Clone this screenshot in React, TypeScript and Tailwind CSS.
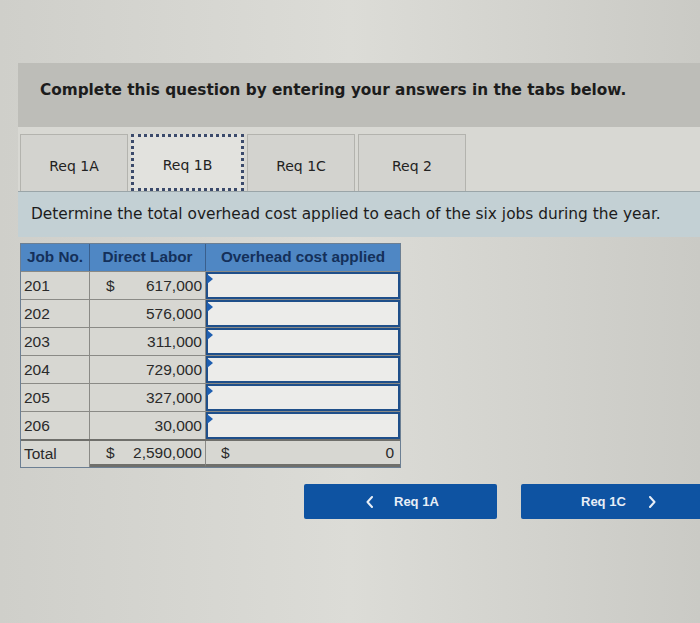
const rows = [
  { job: '201', labor: '617,000', dollar: true },
  { job: '202', labor: '576,000' },
  { job: '203', labor: '311,000' },
  { job: '204', labor: '729,000' },
  { job: '205', labor: '327,000' },
  { job: '206', labor: '30,000' },
];

const tabs = ['Req 1A', 'Req 1B', 'Req 1C', 'Req 2'];

function ChevronLeft() {
  return (
    <svg width="8" height="12" viewBox="0 0 8 12" fill="none" stroke="currentColor" strokeWidth="2" strokeLinecap="round" strokeLinejoin="round">
      <path d="M6 1L1.5 6L6 11" />
    </svg>
  );
}

function ChevronRight() {
  return (
    <svg width="8" height="12" viewBox="0 0 8 12" fill="none" stroke="currentColor" strokeWidth="2" strokeLinecap="round" strokeLinejoin="round">
      <path d="M2 1L6.5 6L2 11" />
    </svg>
  );
}

export default function App() {
  return (
    <div className="w-[700px] h-[623px] overflow-hidden bg-gradient-to-r from-[#cfcfca] via-[#dcdcd7] to-[#cacac5] pt-[63px] pl-[18px]">
      {/* Question header */}
      <div className="h-[64px] bg-[#bdbdb8] pt-[16px] pl-[22px] font-['DejaVu_Sans',sans-serif] font-bold text-[15.3px] text-[#1c1c1c]">
        Complete this question by entering your answers in the tabs below.
      </div>

      {/* Tabs */}
      <div className="bg-[#d8d8d3] pt-[7px] pl-[2px] flex gap-[3px] font-['DejaVu_Sans',sans-serif] text-[14px] text-[#222]">
        {tabs.map((t, i) => (
          <div
            key={t}
            className={
              i === 1
                ? 'w-[113px] h-[57px] flex items-center justify-center pt-[6px] bg-[#e2e2de] border-[3px] border-dotted border-[#3b4a6b]'
                : 'w-[108px] h-[57px] flex items-center justify-center pt-[6px] bg-[#d3d3cf] border border-[#b3b3ae] border-b-0'
            }
          >
            {t}
          </div>
        ))}
      </div>

      {/* Instruction */}
      <div className="h-[46px] bg-[#c3d0d4] border-t border-[#9aa5a8] flex items-center pl-[13px] font-['DejaVu_Sans',sans-serif] text-[15.4px] text-[#1c1c1c]">
        Determine the total overhead cost applied to each of the six jobs during the year.
      </div>

      {/* Table */}
      <div className="pt-[6px] pl-[2px] font-['Liberation_Sans',Arial,sans-serif] text-[15.5px] text-[#2a2a2a]">
        <div className="w-[381px] border border-[#6c7f93]">
          <div className="flex h-[27px] bg-[#4f87c4] text-[#14305a] font-bold text-[15.3px]">
            <div className="w-[69px] flex items-center justify-center border-r border-[#3a5f8c]">Job No.</div>
            <div className="w-[116px] flex items-center justify-center border-r border-[#3a5f8c]">Direct Labor</div>
            <div className="flex-1 flex items-center justify-center">Overhead cost applied</div>
          </div>
          {rows.map((r) => (
            <div key={r.job} className="flex h-[28px] border-t border-[#8a8a86] bg-[#d7d7d2]">
              <div className="w-[69px] flex items-center pl-[3px] border-r border-[#8a8a86]">{r.job}</div>
              <div className="w-[116px] flex items-center justify-between pl-[16px] pr-[3px] border-r border-[#8a8a86]">
                <span>{r.dollar ? '$' : ''}</span>
                <span>{r.labor}</span>
              </div>
              <div className="flex-1 relative bg-[#ececea] border-2 border-[#1f4f8a]">
                <div className="absolute -left-[1px] top-0 w-0 h-0 border-t-[5px] border-b-[5px] border-l-[6px] border-t-transparent border-b-transparent border-l-[#1f5fb0]" />
              </div>
            </div>
          ))}
          <div className="flex h-[28px] border-t-2 border-[#6f6f6b] bg-[#d7d7d2]">
            <div className="w-[69px] flex items-center pl-[3px] border-r border-[#8a8a86]">Total</div>
            <div className="w-[116px] flex items-center justify-between pl-[16px] pr-[3px] border-r border-[#8a8a86] border-b-[3px] border-b-[#6f6f6b]">
              <span>$</span>
              <span>2,590,000</span>
            </div>
            <div className="flex-1 flex items-center justify-between pl-[15px] pr-[6px] border-b-[3px] border-b-[#6f6f6b]">
              <span>$</span>
              <span>0</span>
            </div>
          </div>
        </div>
      </div>

      {/* Nav buttons */}
      <div className="flex gap-[24px] pl-[286px] pt-[16px] font-['Liberation_Sans',Arial,sans-serif] font-bold text-[13px] text-[#e8eef6]">
        <div className="shrink-0 w-[193px] h-[35px] bg-[#0e53a2] rounded-[2px] flex items-center pl-[62px] gap-[20px]">
          <ChevronLeft />
          <span>Req 1A</span>
        </div>
        <div className="shrink-0 w-[200px] h-[35px] bg-[#0e53a2] rounded-[2px] flex items-center pl-[60px] gap-[22px]">
          <span>Req 1C</span>
          <ChevronRight />
        </div>
      </div>
    </div>
  );
}
